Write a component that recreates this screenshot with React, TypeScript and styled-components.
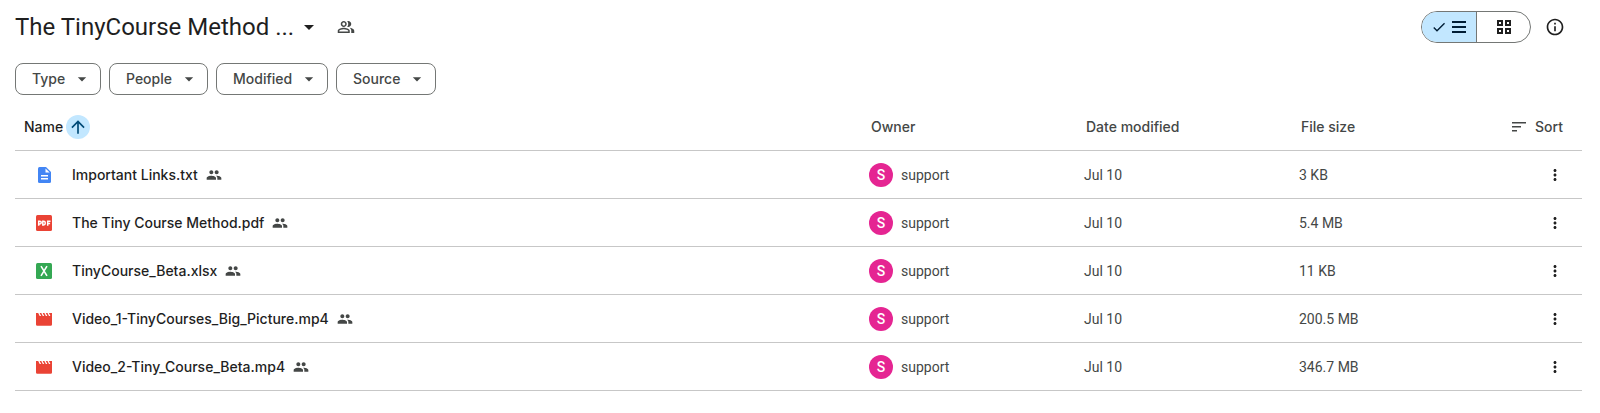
import React from 'react';
import styled, { createGlobalStyle, css } from 'styled-components';

const ui = 'Inter, "Liberation Sans", sans-serif';
const body = 'Roboto, "Liberation Sans", sans-serif';

const GlobalStyle = createGlobalStyle`
  *, *::before, *::after { box-sizing: border-box; }
  body { margin: 0; background: #fff; color: #1f1f1f; font: 400 14px/20px ${body}; }
  button { font: inherit; color: inherit; background: none; border: 0; padding: 0; margin: 0; cursor: pointer; }
`;

const Page = styled.main`
  padding: 7px 18px 16px 15px;
`;

const TopBar = styled.header`
  display: flex;
  align-items: center;
  justify-content: space-between;
  height: 40px;
`;

const TitleGroup = styled.div`
  display: flex;
  align-items: center;
  gap: 13px;
`;

const Title = styled.h1`
  margin: 0;
  font-size: 24px;
  font-weight: 400;
  line-height: 32px;
`;

const TitleButton = styled.button`
  display: flex;
  align-items: center;
  gap: 3px;
`;

const IconButton = styled.button<{ $size?: number }>`
  display: inline-flex;
  align-items: center;
  justify-content: center;
  width: ${({ $size = 24 }) => $size}px;
  height: ${({ $size = 24 }) => $size}px;
  border-radius: 50%;
`;

const PeopleButton = styled(IconButton)`
  color: #444746;
`;

const MoreButton = styled(IconButton)`
  vertical-align: middle;
`;

const ViewTools = styled.div`
  display: flex;
  align-items: center;
  gap: 4px;
  padding-right: 7px;
`;

const Toggle = styled.div`
  display: flex;
  height: 32px;
  border: 1px solid #747775;
  border-radius: 16px;
  overflow: hidden;
`;

const ToggleOption = styled.button<{ $active?: boolean }>`
  display: flex;
  align-items: center;
  justify-content: center;
  gap: 4px;
  width: 53px;
  ${({ $active }) =>
    $active &&
    css`
      width: 55px;
      background: #c2e7ff;
      color: #001d35;
      border-right: 1px solid #747775;
    `}
`;

const Filters = styled.div`
  display: flex;
  gap: 8px;
  padding: 16px 0 8px;
`;

const Chip = styled.button<{ $width: number }>`
  display: flex;
  align-items: center;
  justify-content: space-between;
  min-width: ${({ $width }) => $width}px;
  height: 32px;
  padding: 0 8px 0 16px;
  border: 1px solid #747775;
  border-radius: 8px;
  color: #444746;
  font-family: ${ui};
  font-weight: 500;
`;

const Table = styled.table`
  width: 100%;
  table-layout: fixed;
  border-collapse: separate;
  border-spacing: 0;
`;

const Row = styled.tr`
  height: 48px;

  > * {
    border-bottom: 1px solid #c7c7c7;
  }
`;

const Heading = styled.th<{ $width?: number; $primary?: boolean }>`
  width: ${({ $width }) => ($width ? `${$width}px` : 'auto')};
  padding: 0 0 0 ${({ $primary }) => ($primary ? 9 : 2)}px;
  color: ${({ $primary }) => ($primary ? '#1f1f1f' : '#444746')};
  font-family: ${ui};
  font-weight: 500;
  text-align: left;
`;

const Cell = styled.td<{ $indent?: boolean }>`
  padding: 0 0 0 ${({ $indent }) => ($indent ? 21 : 0)}px;
  color: #444746;
`;

const ActionCell = styled.td`
  padding: 0 15px 0 0;
  text-align: right;
`;

const Inline = styled.div<{ $gap: number }>`
  display: flex;
  align-items: center;
  gap: ${({ $gap }) => $gap}px;
`;

const SortDirection = styled(IconButton)`
  background: #c2e7ff;
  color: #004a77;
`;

const SortButton = styled.button`
  display: flex;
  align-items: center;
  gap: 8px;
  margin-left: auto;
  padding-right: 19px;
`;

const FileLink = styled.a`
  color: #1f1f1f;
  font-family: ${ui};
  font-weight: 500;
  text-decoration: none;
`;

const Avatar = styled.span`
  display: inline-flex;
  align-items: center;
  justify-content: center;
  width: 24px;
  height: 24px;
  border-radius: 50%;
  background: #e52592;
  color: #fff;
  font-weight: 500;
`;

const Icon = styled.svg`
  display: block;
  flex: none;
  fill: currentColor;
`;

const paths = {
  caret: 'M7 10l5 5 5-5z',
  people:
    'M16.67 13.13C18.04 14.06 19 15.32 19 17v3h4v-3c0-2.18-3.57-3.47-6.33-3.87zM15 12c2.21 0 4-1.79 4-4s-1.79-4-4-4c-.47 0-.91.1-1.33.24C14.5 5.27 15 6.58 15 8s-.5 2.73-1.33 3.76c.42.14.86.24 1.33.24zM9 12c2.21 0 4-1.79 4-4s-1.79-4-4-4-4 1.79-4 4 1.79 4 4 4zm0-6c1.1 0 2 .9 2 2s-.9 2-2 2-2-.9-2-2 .9-2 2-2zM9 13c-2.67 0-8 1.34-8 4v3h16v-3c0-2.66-5.33-4-8-4zm6 5H3v-.99C3.2 16.29 6.3 15 9 15s5.8 1.29 6 2v1z',
  shared:
    'M16 11c1.66 0 2.99-1.34 2.99-3S17.66 5 16 5s-3 1.34-3 3 1.34 3 3 3zm-8 0c1.66 0 2.99-1.34 2.99-3S9.66 5 8 5 5 6.34 5 8s1.34 3 3 3zm0 2c-2.33 0-7 1.17-7 3.5V19h14v-2.5c0-2.33-4.67-3.5-7-3.5zm8 0c-.29 0-.62.02-.97.05 1.16.84 1.97 1.97 1.97 3.45V19h6v-2.5c0-2.33-4.67-3.5-7-3.5z',
  check: 'M9 16.17L4.83 12l-1.42 1.41L9 19 21 7l-1.41-1.41z',
  info: 'M11 7h2v2h-2zm0 4h2v6h-2zm1-9C6.48 2 2 6.48 2 12s4.48 10 10 10 10-4.48 10-10S17.52 2 12 2zm0 18c-4.41 0-8-3.59-8-8s3.59-8 8-8 8 3.59 8 8-3.59 8-8 8z',
  up: 'M4 12l1.41 1.41L11 7.83V20h2V7.83l5.58 5.59L20 12l-8-8-8 8z',
  more: 'M12 8c1.1 0 2-.9 2-2s-.9-2-2-2-2 .9-2 2 .9 2 2 2zm0 2c-1.1 0-2 .9-2 2s.9 2 2 2 2-.9 2-2-.9-2-2-2zm0 6c-1.1 0-2 .9-2 2s.9 2 2 2 2-.9 2-2-.9-2-2-2z',
};

const Glyph = ({ name, size }: { name: keyof typeof paths; size: number }) => (
  <Icon width={size} height={size} viewBox="0 0 24 24" aria-hidden="true">
    <path d={paths[name]} />
  </Icon>
);

type Kind = 'doc' | 'pdf' | 'sheet' | 'video';

const FileIcon = ({ kind }: { kind: Kind }) => (
  <Icon width={16} height={16} viewBox="0 0 16 16" aria-hidden="true">
    {kind === 'doc' && (
      <>
        <path
          fill="#4285f4"
          d="M3.5 0H10l5 5v9.500a1.500 1.500 0 0 1-1.500 1.500h-10A1.500 1.500 0 0 1 2 14.500v-13A1.500 1.500 0 0 1 3.500 0z"
        />
        <path fill="#fff" d="M9.500 1.400v4.100h4.200zM5 8h7v1.400H5zM5 11h7v1.400H5z" />
      </>
    )}
    {kind === 'pdf' && (
      <>
        <rect width="16" height="16" rx="1.5" fill="#ea4335" />
        <path
          fill="none"
          stroke="#fff"
          strokeWidth="1.500"
          d="M2.700 10.700V6.200h1.200a1 1 0 0 1 0 2.700H2.700M6.800 6.200h.9q1.500 0 1.500 1.300v1q0 1.400-1.500 1.400h-.9zM11.700 10.700V6.200h2.800M11.700 8.600h2.400"
        />
      </>
    )}
    {kind === 'sheet' && (
      <>
        <rect width="16" height="16" rx="1.5" fill="#34a853" />
        <path fill="none" stroke="#fff" strokeWidth="1.6" d="M5 3.200l6 9.600M11 3.200l-6 9.600" />
      </>
    )}
    {kind === 'video' && (
      <path
        fill="#ea4335"
        d="M0 2h2.200l1.500 3h1.400L3.600 2h1.700l1.500 3h1.400L6.700 2h1.700l1.500 3h1.400L9.800 2h1.700l1.500 3h1.400l-1.500-3H16v11.500a1.300 1.300 0 0 1-1.300 1.300H1.300A1.300 1.300 0 0 1 0 13.500z"
      />
    )}
  </Icon>
);

const SharedMark = () => (
  <Icon width={16} height={16} viewBox="0 0 24 24" role="img" aria-label="Shared">
    <path d={paths.shared} />
  </Icon>
);

const filters = [
  { label: 'Type', width: 86 },
  { label: 'People', width: 99 },
  { label: 'Modified', width: 112 },
  { label: 'Source', width: 100 },
];

const files: { name: string; kind: Kind; size: string }[] = [
  { name: 'Important Links.txt', kind: 'doc', size: '3 KB' },
  { name: 'The Tiny Course Method.pdf', kind: 'pdf', size: '5.4 MB' },
  { name: 'TinyCourse_Beta.xlsx', kind: 'sheet', size: '11 KB' },
  { name: 'Video_1-TinyCourses_Big_Picture.mp4', kind: 'video', size: '200.5 MB' },
  { name: 'Video_2-Tiny_Course_Beta.mp4', kind: 'video', size: '346.7 MB' },
];

export default function App() {
  return (
    <Page>
      <GlobalStyle />
      <TopBar>
        <TitleGroup>
          <Title>
            <TitleButton>
              The TinyCourse Method ...
              <Glyph name="caret" size={24} />
            </TitleButton>
          </Title>
          <PeopleButton aria-label="Manage people">
            <Glyph name="people" size={18} />
          </PeopleButton>
        </TitleGroup>
        <ViewTools>
          <Toggle role="group" aria-label="Layout">
            <ToggleOption $active aria-pressed="true" aria-label="List layout">
              <Glyph name="check" size={16} />
              <Icon width={16} height={14} viewBox="0 0 16 14" aria-hidden="true">
                <path d="M1 1h14v2H1zM1 6h14v2H1zM1 11h14v2H1z" />
              </Icon>
            </ToggleOption>
            <ToggleOption aria-pressed="false" aria-label="Grid layout">
              <Icon width={14} height={14} viewBox="0 0 14 14" aria-hidden="true">
                <path
                  fillRule="evenodd"
                  d="M0 0h6v6H0zM2 2v2h2V2zM8 0h6v6H8zM10 2v2h2V2zM0 8h6v6H0zM2 10v2h2v-2zM8 8h6v6H8zM10 10v2h2v-2z"
                />
              </Icon>
            </ToggleOption>
          </Toggle>
          <IconButton $size={40} aria-label="View details">
            <Glyph name="info" size={20} />
          </IconButton>
        </ViewTools>
      </TopBar>

      <Filters>
        {filters.map(({ label, width }) => (
          <Chip key={label} $width={width}>
            {label}
            <Glyph name="caret" size={20} />
          </Chip>
        ))}
      </Filters>

      <Table>
        <thead>
          <Row>
            <Heading $primary scope="col">
              <Inline $gap={3}>
                Name
                <SortDirection aria-label="Reverse sort direction">
                  <Glyph name="up" size={20} />
                </SortDirection>
              </Inline>
            </Heading>
            <Heading $width={215} scope="col">Owner</Heading>
            <Heading $width={215} scope="col">Date modified</Heading>
            <Heading $width={150} scope="col">File size</Heading>
            <Heading $width={133} scope="col">
              <SortButton>
                <Icon width={16} height={16} viewBox="0 0 16 16" aria-hidden="true">
                  <path d="M1 3h14v1.500H1zM1 7h9v1.500H1zM1 11h5v1.500H1z" />
                </Icon>
                Sort
              </SortButton>
            </Heading>
          </Row>
        </thead>
        <tbody>
          {files.map(({ name, kind, size }) => (
            <Row key={name}>
              <Cell $indent>
                <Inline $gap={8}>
                  <Inline $gap={20}>
                    <FileIcon kind={kind} />
                    <FileLink href="#">{name}</FileLink>
                  </Inline>
                  <SharedMark />
                </Inline>
              </Cell>
              <Cell>
                <Inline $gap={8}>
                  <Avatar aria-hidden="true">S</Avatar>
                  support
                </Inline>
              </Cell>
              <Cell>Jul 10</Cell>
              <Cell>{size}</Cell>
              <ActionCell>
                <MoreButton aria-label={`More actions for ${name}`}>
                  <Glyph name="more" size={18} />
                </MoreButton>
              </ActionCell>
            </Row>
          ))}
        </tbody>
      </Table>
    </Page>
  );
}
